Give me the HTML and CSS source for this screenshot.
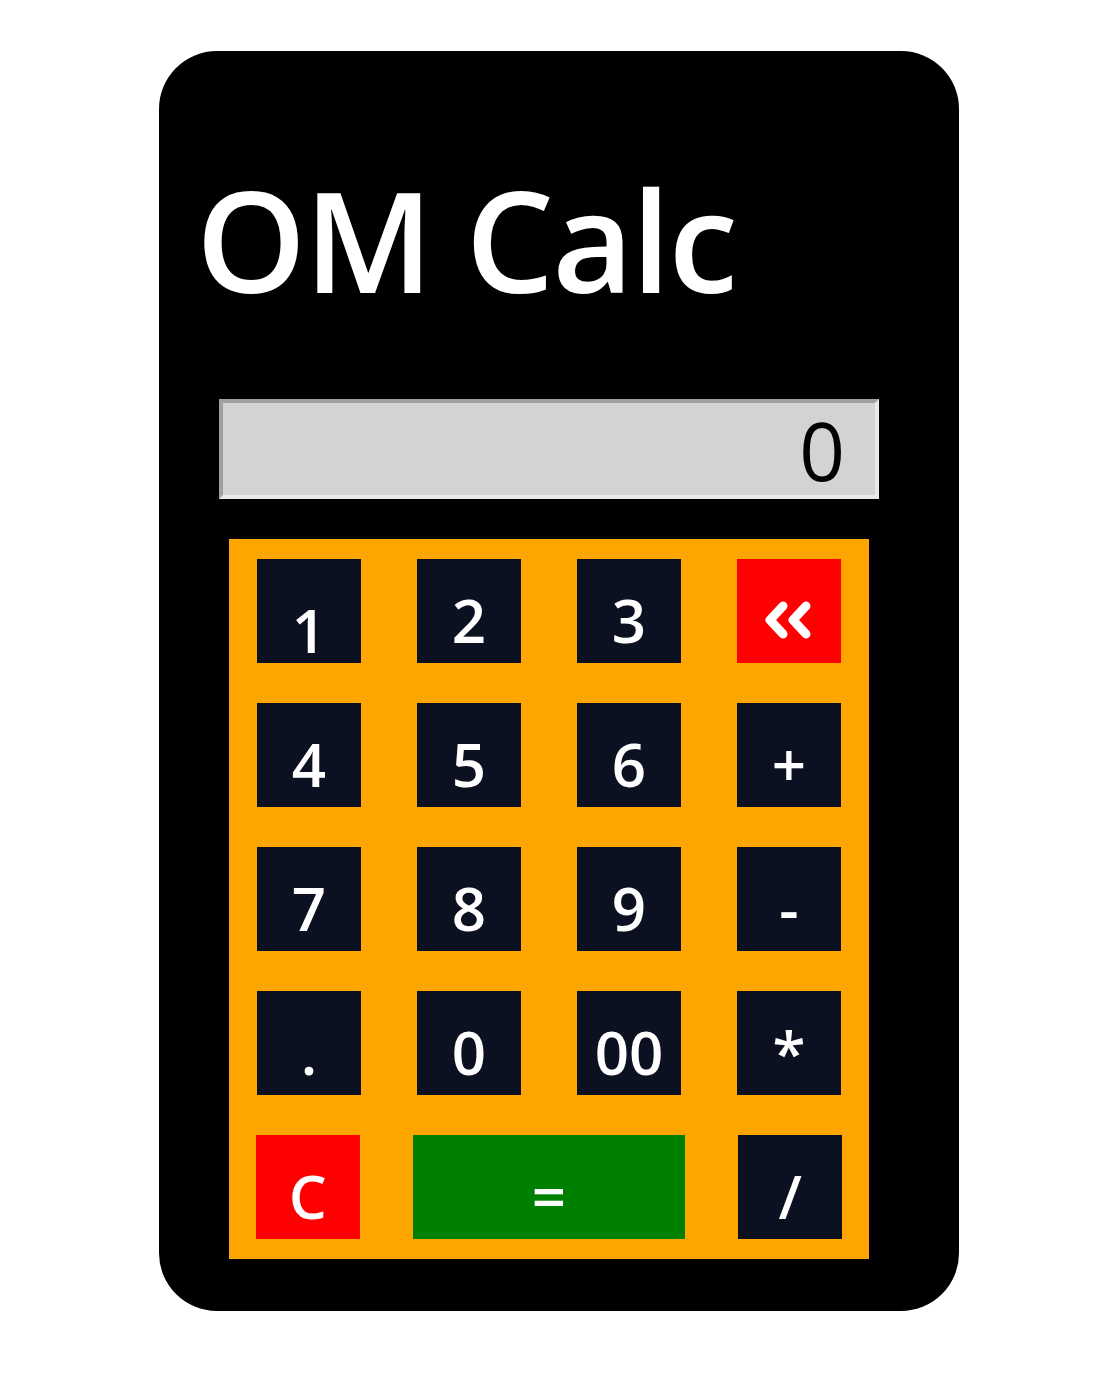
FILE: index.html
```html
<!DOCTYPE html>
<html lang="en">
<head>
<meta charset="utf-8">
<title>OM Calc</title>
<link rel="stylesheet" href="styles.css">
</head>
<body>
<div class="page">
  <div class="calc">
    <h1 class="title">OM Calc</h1>
    <div class="display">0</div>
    <div class="keypad">
      <div class="row">
        <div class="key key-low">1</div>
        <div class="key">2</div>
        <div class="key">3</div>
        <div class="key key-red key-icon">
          <svg width="48" height="40" viewBox="0 0 48 40" aria-hidden="true">
            <path d="M18 6 L5 20 L18 34 M41 6 L28 20 L41 34" fill="none" stroke="#fff" stroke-width="9" stroke-linecap="round" stroke-linejoin="round"/>
          </svg>
        </div>
      </div>
      <div class="row">
        <div class="key">4</div>
        <div class="key">5</div>
        <div class="key">6</div>
        <div class="key">+</div>
      </div>
      <div class="row">
        <div class="key">7</div>
        <div class="key">8</div>
        <div class="key">9</div>
        <div class="key">-</div>
      </div>
      <div class="row">
        <div class="key">.</div>
        <div class="key">0</div>
        <div class="key">00</div>
        <div class="key">*</div>
      </div>
      <div class="row">
        <div class="key key-red">C</div>
        <div class="key key-wide key-green">=</div>
        <div class="key">/</div>
      </div>
    </div>
  </div>
</div>
</body>
</html>
```

FILE: styles.css
```css
body {
  margin: 0;
  background: #ffffff;
  font-family: "Open Sans", "Noto Sans", sans-serif;
}

.page {
  padding: 51px 0 86px 159px;
}

.calc {
  width: 800px;
  box-sizing: border-box;
  background: #000000;
  border-radius: 58px;
  padding: 93px 60px 52px 40px;
}

.title {
  margin: 0 0 65px -3px;
  font-size: 140px;
  line-height: 190px;
  font-weight: 600;
  letter-spacing: -2px;
  color: #ffffff;
}

.display {
  width: 660px;
  height: 100px;
  box-sizing: border-box;
  margin: 0 auto;
  background: #d3d3d3;
  border: 4px solid;
  border-color: #a0a0a0 #e9e9e9 #e9e9e9 #a0a0a0;
  padding: 2px 30px 0 0;
  text-align: right;
  font-size: 80px;
  line-height: 90px;
  font-weight: 500;
  color: #000000;
}

.keypad {
  width: 640px;
  box-sizing: border-box;
  margin: 40px auto 0;
  background: #ffa500;
  padding: 20px 0;
  display: flex;
  flex-direction: column;
  gap: 40px;
}

.row {
  display: flex;
  justify-content: space-around;
}

.key {
  width: 104px;
  height: 104px;
  box-sizing: border-box;
  padding-top: 31px;
  background: #0b1120;
  color: #ffffff;
  text-align: center;
  font-size: 60px;
  line-height: 60px;
  font-weight: 600;
}

.key-low {
  padding-top: 41px;
}

.key-red {
  background: #ff0000;
}

.key-green {
  background: #008000;
}

.key-wide {
  width: 272px;
}

.key-icon {
  display: flex;
  justify-content: center;
  align-items: flex-start;
  padding-top: 41px;
}
```
